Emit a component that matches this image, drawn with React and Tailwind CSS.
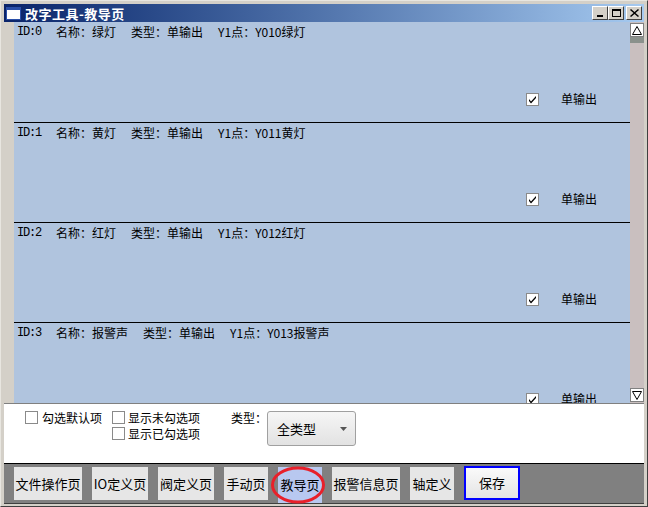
const rows = [
  { id: 0, name: "绿灯", type: "单输出", y1: "Y010绿灯" },
  { id: 1, name: "黄灯", type: "单输出", y1: "Y011黄灯" },
  { id: 2, name: "红灯", type: "单输出", y1: "Y012红灯" },
  { id: 3, name: "报警声", type: "单输出", y1: "Y013报警声" },
];

const tabs = [
  { label: "文件操作页", w: "w-[68px]" },
  { label: "IO定义页", w: "w-[56px]" },
  { label: "阀定义页", w: "w-[56px]" },
  { label: "手动页", w: "w-[44px]" },
  { label: "教导页", w: "w-[44px]", active: true },
  { label: "报警信息页", w: "w-[68px]" },
  { label: "轴定义", w: "w-[44px]" },
];

const CheckMark = () => (
  <svg width="9" height="9" viewBox="0 0 9 9">
    <path d="M1 4 L3 6.5 L8 1 L8 3 L3 8.5 L1 6 Z" fill="#000" />
  </svg>
);

const Box = ({ checked }) => (
  <span className="w-[13px] h-[13px] bg-white border border-[#8a8a8a] flex items-center justify-center shrink-0">
    {checked && <CheckMark />}
  </span>
);

const TitleBtn = ({ children }) => (
  <div className="w-[16px] h-[14px] bg-[#d4d0c8] border border-t-white border-l-white border-r-[#404040] border-b-[#404040] flex items-center justify-center">
    {children}
  </div>
);

export default function App() {
  return (
    <div
      className="w-[648px] h-[507px] bg-[#d4d0c8] border border-t-[#e8e6e0] border-l-[#e8e6e0] border-r-[#404040] border-b-[#404040] flex flex-col p-[3px] text-[12px] text-black overflow-hidden"
      style={{ fontFamily: '"Noto Sans CJK SC", "Noto Sans", sans-serif' }}
    >
      {/* TITLE BAR */}
      <div className="h-[18px] shrink-0 bg-gradient-to-r from-[#0a246a] to-[#a6caf0] flex items-center pl-[2px] pr-[2px]">
        <div className="w-[15px] h-[13px] bg-white border-t-[3px] border-[#2a4fa8] border-x border-b"></div>
        <span className="ml-[4px] text-white font-bold text-[13px] tracking-[0.5px] leading-none">改字工具-教导页</span>
        <div className="ml-auto flex items-center">
          <TitleBtn>
            <div className="w-[6px] h-[2px] bg-black mt-[6px] -ml-[1px]"></div>
          </TitleBtn>
          <TitleBtn>
            <div className="w-[9px] h-[8px] border border-black border-t-2"></div>
          </TitleBtn>
          <div className="ml-[2px]">
            <TitleBtn>
              <svg width="9" height="8" viewBox="0 0 9 8">
                <path d="M1 0 L4.5 3 L8 0 L9 1 L5.5 4 L9 7 L8 8 L4.5 5 L1 8 L0 7 L3.5 4 L0 1 Z" fill="#000" />
              </svg>
            </TitleBtn>
          </div>
        </div>
      </div>

      {/* LIST + SCROLLBAR */}
      <div className="h-[381px] shrink-0 flex">
        <div className="w-[10px] bg-[#d4d0c8]"></div>
        <div className="flex-1 bg-[#b0c4de] overflow-hidden">
          {rows.map((r, idx) => (
            <div
              key={r.id}
              className={`h-[100px] flex flex-col ${idx > 0 ? "border-t border-black" : ""}`}
            >
              <div className="flex gap-[15px] pl-[3px] pt-[2px] leading-[16px] whitespace-nowrap">
                <span style={{ fontFamily: '"Liberation Mono", monospace' }} className="text-[12px] tracking-[-1.2px]">ID:{r.id}</span>
                <span>名称：{r.name}</span>
                <span>类型：{r.type}</span>
                <span>Y1点：{r.y1}</span>
              </div>
              <div className="mt-auto mb-[14px] ml-[512px] flex items-center gap-[22px]">
                <Box checked />
                <span>单输出</span>
              </div>
            </div>
          ))}
        </div>
        <div className="w-[14px] bg-[#c9bfbf] flex flex-col">
          <div className="h-[14px] bg-white border border-[#808080] flex items-center justify-center mt-[1px]">
            <svg width="10" height="9" viewBox="0 0 10 9">
              <path d="M5 0.5 L9.5 8.5 L0.5 8.5 Z" fill="none" stroke="#000" />
            </svg>
          </div>
          <div className="h-[6px] bg-[#8a918c]"></div>
          <div className="flex-1"></div>
          <div className="h-[14px] bg-white border border-[#808080] flex items-center justify-center mb-[1px]">
            <svg width="10" height="9" viewBox="0 0 10 9">
              <path d="M0.5 0.5 L9.5 0.5 L5 8.5 Z" fill="none" stroke="#000" />
            </svg>
          </div>
        </div>
      </div>

      {/* FILTER PANEL */}
      <div className="h-[61px] shrink-0 bg-white border-t border-[#808080] border-b border-b-black flex pt-[7px] text-[12px] leading-[14px]">
        <div className="ml-[21px] flex items-start gap-[4px]">
          <Box />
          <span>勾选默认项</span>
        </div>
        <div className="ml-[10px] flex flex-col gap-[2px]">
          <div className="flex items-start gap-[3px]">
            <Box />
            <span>显示未勾选项</span>
          </div>
          <div className="flex items-start gap-[3px]">
            <Box />
            <span>显示已勾选项</span>
          </div>
        </div>
        <span className="ml-[31px]">类型：</span>
        <div className="w-[89px] h-[35px] border border-[#a0a0a0] rounded-[3px] bg-gradient-to-b from-[#f6f6f6] to-[#e2e2e2] flex items-center pl-[9px] pr-[8px] text-[13px]">
          <span>全类型</span>
          <svg className="ml-auto" width="7" height="4" viewBox="0 0 7 4">
            <path d="M0 0 L7 0 L3.5 4 Z" fill="#555" />
          </svg>
        </div>
      </div>

      {/* TAB BAR */}
      <div className="flex-1 bg-[#808080] flex items-start pt-[3px] pl-[10px] gap-[10px] relative border-b border-[#404040]">
        {tabs.map((t) => (
          <div
            key={t.label}
            className={`${t.w} ${t.active ? "h-[36px] bg-[#b8c8f0]" : "h-[33px] bg-[#e6e6e6]"} flex items-center justify-center text-[13px] whitespace-nowrap`}
          >
            {t.label}
          </div>
        ))}
        <div className="w-[56px] h-[34px] -mt-[1px] border-2 border-[#0000ff] bg-gradient-to-b from-[#fafafa] to-[#e4e4e4] flex items-center justify-center text-[13px]">
          保存
        </div>
        <svg className="absolute left-[266px] top-[2px]" width="56" height="38" viewBox="0 0 56 38">
          <ellipse cx="28" cy="19" rx="25.5" ry="17" fill="none" stroke="#e8202a" strokeWidth="3" />
        </svg>
      </div>
    </div>
  );
}
